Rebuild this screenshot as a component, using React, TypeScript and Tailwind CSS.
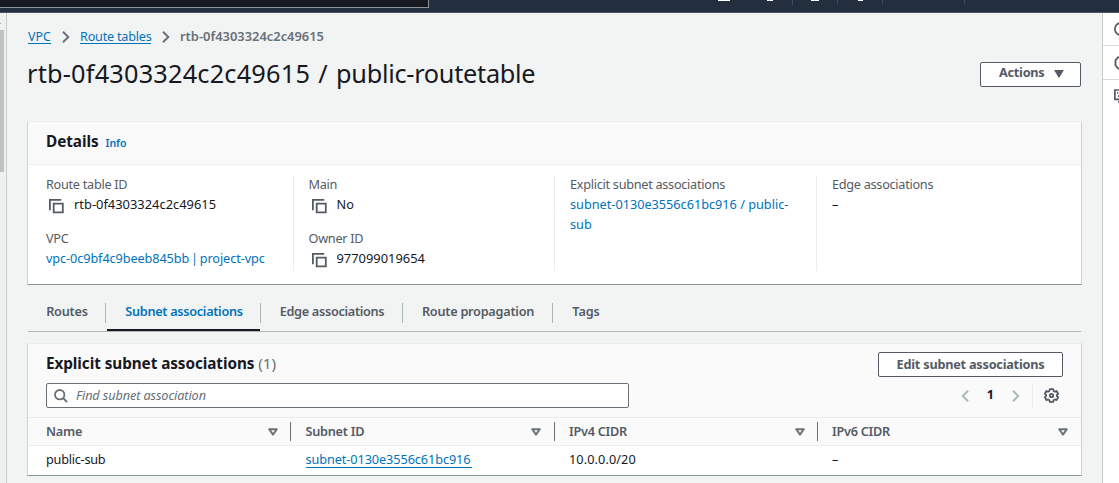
import type { ReactNode } from 'react';

function CopyIcon() {
  return (
    <svg width="15" height="15" viewBox="0 0 15 15" fill="none" stroke="#545b64" strokeWidth="1.8" className="block shrink-0">
      <path d="M0.9 11.2V0.9H12.2" />
      <path d="M4.7 4.7H13.8V13.4H4.7Z" />
    </svg>
  );
}

function Chevron({ dir = 'right', className = '' }: { dir?: 'left' | 'right'; className?: string }) {
  return (
    <svg width="8" height="12" viewBox="0 0 8 12" fill="none" stroke="currentColor" strokeWidth="1.9" className={`block shrink-0 ${className}`}>
      <path d={dir === 'right' ? 'M1 0.8L6.3 6L1 11.2' : 'M7 0.8L1.7 6L7 11.2'} />
    </svg>
  );
}

function SortIcon() {
  return (
    <svg width="10" height="8" viewBox="0 0 10 8" fill="none" stroke="#687078" strokeWidth="1.9" strokeLinejoin="round" className="block shrink-0">
      <path d="M1.2 1.2H8.8L5 6.6Z" />
    </svg>
  );
}

function GearIcon() {
  return (
    <svg width="15" height="15" viewBox="0 0 16 16" fill="none" stroke="#545b64" strokeWidth="1.9" strokeLinejoin="round" className="block shrink-0">
      <path d="M6.2 1.2H9.8L10.2 3.1L11.6 3.9L13.4 3.2L15.1 6.2L13.7 7.4V8.7L15.1 9.9L13.4 12.9L11.6 12.2L10.2 13L9.8 14.9H6.2L5.8 13L4.4 12.2L2.6 12.9L0.9 9.9L2.3 8.7V7.4L0.9 6.2L2.6 3.2L4.4 3.9L5.8 3.1Z" />
      <circle cx="8" cy="8" r="1.8" />
    </svg>
  );
}

function TopBar() {
  return (
    <header className="flex h-[13px] shrink-0 items-start overflow-hidden border-b border-[#4b5563] bg-[#232f3e]">
      <div className="h-2 w-[429px] border-r border-b border-[#879596] bg-[#16191f]" />
      <div className="ml-[289px] h-px w-[12px] bg-white" />
      <div className="ml-[37px] h-px w-[6px] bg-white" />
      <div className="ml-[19px] h-[5px] w-px bg-[#414d5c]" />
      <div className="ml-[18px] h-px w-[8px] bg-white" />
      <div className="ml-[18px] h-1 w-px bg-[#414d5c]" />
      <div className="ml-[20px] h-px w-[5px] bg-white" />
      <div className="ml-[19px] h-1 w-px bg-[#414d5c]" />
      <div className="ml-[81px] h-1 w-px bg-[#414d5c]" />
    </header>
  );
}

function Breadcrumbs() {
  return (
    <nav className="flex h-[18px] items-start text-[13px] leading-[16px]">
      <a className="h-4 w-[23px] border-b border-[#0073bb] text-[12.4px] leading-[17px] whitespace-nowrap text-[#0073bb]">VPC</a>
      <Chevron className="mt-[3px] ml-[11px] text-[#687078]" />
      <a className="ml-[10px] h-4 w-[71px] border-b border-[#0073bb] text-[12.6px] leading-[17px] tracking-[-0.2px] whitespace-nowrap text-[#0073bb]">Route tables</a>
      <Chevron className="mt-[3px] ml-[11px] text-[#687078]" />
      <span className="ml-[10px] text-[12.9px] leading-[16px] font-semibold text-[#687078]">rtb-0f4303324c2c49615</span>
    </nav>
  );
}

function Card({ children, className }: { children: ReactNode; className: string }) {
  return (
    <section className={`w-[1055px] border border-t-[#eaeded] border-r-[#ced4d5] border-b-[#879596] border-l-[#ced4d5] bg-white ${className}`}>
      {children}
    </section>
  );
}

function Field({ label, children, copy = false }: { label: string; children: ReactNode; copy?: boolean }) {
  return (
    <div className="flex flex-col text-[13px] leading-[20px]">
      <div className="text-[12.7px] tracking-[-0.28px] text-[#545b64]">{label}</div>
      <div className="flex">
        {copy && (
          <span className="mt-[5px] mr-[10px] ml-[3px]">
            <CopyIcon />
          </span>
        )}
        {children}
      </div>
    </div>
  );
}

function Details() {
  return (
    <Card className="mt-[31px] h-[164px]">
      <div className="flex h-[43px] items-baseline gap-[7px] border-b border-[#eaeded] bg-[#fafafa] px-[18px] pt-[8px]">
        <h2 className="text-[15.3px] leading-[22px] font-bold tracking-[-0.05px] text-[#16191f]">Details</h2>
        <a className="text-[10.6px] font-semibold tracking-[-0.1px] text-[#0073bb]">Info</a>
      </div>
      <div className="mt-[11px] flex h-[95px] divide-x divide-[#eaeded]">
        <div className="flex w-[266px] flex-col gap-[14px] pl-[18px]">
          <div className="-mt-[2px]">
            <Field label="Route table ID" copy>
              <span className="text-[12.9px] text-[#16191f]">rtb-0f4303324c2c49615</span>
            </Field>
          </div>
          <Field label="VPC">
            <a className="text-[12.7px] tracking-[-0.09px] whitespace-nowrap text-[#0073bb] [word-spacing:-1.4px]">vpc-0c9bf4c9beeb845bb | project-vpc</a>
          </Field>
        </div>
        <div className="flex w-[261px] flex-col gap-[14px] pl-[14.5px]">
          <div className="-mt-[2px]">
            <Field label="Main" copy>
              <span className="text-[12.7px] text-[#16191f]">No</span>
            </Field>
          </div>
          <Field label="Owner ID" copy>
            <span className="text-[12.9px] text-[#16191f]">977099019654</span>
          </Field>
        </div>
        <div className="w-[262px] pl-[15px]">
          <div className="-mt-[2px]">
            <Field label="Explicit subnet associations">
              <a className="text-[12.7px] whitespace-nowrap text-[#0073bb]">
                subnet-0130e3556c61bc916 / public-
                <br />
                sub
              </a>
            </Field>
          </div>
        </div>
        <div className="pl-[15px]">
          <div className="-mt-[2px]">
            <Field label="Edge associations">
              <span className="text-[#16191f]">–</span>
            </Field>
          </div>
        </div>
      </div>
    </Card>
  );
}

function Tabs() {
  const divider = <div className="mt-[18px] h-5 w-px bg-[#aab7b8]" />;
  const tab = 'pt-[16px] text-center leading-[20px] whitespace-nowrap';
  return (
    <div className="ml-px flex h-[47px] w-[1053px] border-b border-[#aab7b8] text-[12.7px] font-semibold tracking-[-0.3px] text-[#545b64]">
      <div className={`w-[77px] pl-px tracking-[-0.2px] ${tab}`}>Routes</div>
      {divider}
      <div className={`ml-px w-[153px] border-b-2 border-[#16191f] pl-px text-[#0073bb] ${tab}`}>Subnet associations</div>
      {divider}
      <div className={`w-[141px] pl-px ${tab}`}>Edge associations</div>
      {divider}
      <div className={`w-[149px] pl-px tracking-[-0.25px] ${tab}`}>Route propagation</div>
      {divider}
      <div className={`w-[66px] tracking-[-0.1px] ${tab}`}>Tags</div>
    </div>
  );
}

function HeadCell({ children, className, last = false }: { children: ReactNode; className: string; last?: boolean }) {
  return (
    <div className={`flex h-[19px] items-center justify-between ${last ? '' : 'border-r border-[#687078]'} ${className}`}>
      <span>{children}</span>
      <SortIcon />
    </div>
  );
}

function Associations() {
  return (
    <Card className="mt-[11px] h-[133px]">
      <div className="flex h-[74px] flex-col border-b border-[#eaeded] bg-[#fafafa] px-[18px] pt-[8px]">
        <div className="flex h-[25px] items-start justify-between">
          <h2 className="text-[15.3px] leading-[23px] font-bold tracking-[-0.07px] text-[#16191f]">
            Explicit subnet associations <span className="font-normal text-[#687078]">(1)</span>
          </h2>
          <button className="h-[25px] w-[185px] rounded-[2px] border border-[#545b64] bg-white pb-[2px] text-[12.7px] leading-[20px] font-bold tracking-[-0.22px] whitespace-nowrap text-[#545b64]">
            Edit subnet associations
          </button>
        </div>
        <div className="mt-[6px] flex h-[25px] items-center">
          <div className="flex h-[25px] w-[583px] items-center rounded-[2px] border border-[#687078] bg-white pl-[7px]">
            <svg width="14" height="14" viewBox="0 0 14 14" fill="none" stroke="#687078" strokeWidth="1.8" className="block">
              <circle cx="5.7" cy="5.7" r="4.7" />
              <path d="M9 9L13 13" />
            </svg>
            <span className="ml-[8px] pb-[2px] text-[12.7px] leading-[20px] tracking-[-0.1px] text-[#687078] italic">Find subnet association</span>
          </div>
          <div className="ml-[332px] flex h-[25px] items-center">
            <Chevron dir="left" className="text-[#aab7b8]" />
            <span className="w-[43px] pb-[3px] text-center text-[12.7px] leading-[20px] font-bold text-[#16191f]">1</span>
            <Chevron className="text-[#aab7b8]" />
            <div className="ml-[12px] h-[25px] w-px bg-[#eaeded]" />
            <div className="ml-[11px]">
              <GearIcon />
            </div>
          </div>
        </div>
      </div>
      <div className="flex h-[28px] items-center border-b border-[#eaeded] bg-[#fafafa] text-[12.7px] font-semibold tracking-[-0.25px] text-[#545b64]">
        <HeadCell className="w-[263px] pr-[12px] pl-[18px]">Name</HeadCell>
        <HeadCell className="w-[264px] pr-[13px] pl-[14.5px]">Subnet ID</HeadCell>
        <HeadCell className="w-[263px] pr-[12px] pl-[14px]">IPv4 CIDR</HeadCell>
        <HeadCell className="w-[263px] pr-[13px] pl-[14px]" last>IPv6 CIDR</HeadCell>
      </div>
      <div className="flex h-[29px] items-start pt-[4px] text-[12.7px] leading-[18px] text-[#16191f]">
        <div className="w-[263px] pl-[18px] tracking-[-0.25px]">public-sub</div>
        <div className="w-[264px] pl-[14.5px]">
          <a className="block h-[18px] w-[166px] border-b border-[#0073bb] tracking-[-0.08px] whitespace-nowrap text-[#0073bb]">subnet-0130e3556c61bc916</a>
        </div>
        <div className="w-[263px] pl-[14px] tracking-[0.1px]">10.0.0.0/20</div>
        <div className="pl-[14px]">–</div>
      </div>
    </Card>
  );
}

function ToolRail() {
  return (
    <aside className="flex w-[17px] shrink-0 flex-col overflow-hidden border-l border-[#c6cccd] bg-white text-[#545b64]">
      <div className="flex h-[33px] shrink-0 items-center border-b border-[#d5dbdb] pl-[11px]">
        <svg width="14" height="14" viewBox="0 0 14 14" fill="none" stroke="currentColor" strokeWidth="1.7" className="block shrink-0">
          <circle cx="7" cy="7" r="6.1" />
          <path d="M7 6V10M7 3.5V5" />
        </svg>
      </div>
      <div className="flex h-[34px] shrink-0 items-center border-b border-[#d5dbdb] pl-[11px]">
        <svg width="14" height="14" viewBox="0 0 14 14" fill="none" stroke="currentColor" strokeWidth="1.8" className="block shrink-0">
          <path d="M4.3 1.2L1.5 4V9.5L4.3 12.5H10L13 9.5V4L10 1.2Z" />
        </svg>
      </div>
      <div className="flex h-[32px] shrink-0 items-center pl-[11px]">
        <svg width="14" height="14" viewBox="0 0 14 14" fill="none" stroke="currentColor" strokeWidth="1.7" className="block shrink-0">
          <path d="M0.9 1H13V10.3H0.9Z" />
          <path d="M3 3.8H4.2M4 7.2H8M4 12.8H10" />
        </svg>
      </div>
    </aside>
  );
}

export default function App() {
  return (
    <div className="flex h-[483px] w-[1119px] flex-col overflow-hidden bg-[#f2f3f3] font-['Noto_Sans','Open_Sans',sans-serif]">
      <TopBar />
      <div className="flex min-h-0 flex-1">
        <div className="flex w-[7px] shrink-0 flex-col border-r border-[#c6cccd] bg-[#f0f0f0]">
          <div className="mt-[10px] h-px w-px bg-[#a3a3a3]" />
          <div className="mt-[6px] h-[142px] w-1 bg-[#c1c1c1]" />
        </div>
        <main className="min-w-0 flex-1 pt-[15px] pl-[20px]">
          <div className="pl-px">
            <Breadcrumbs />
          </div>
          <div className="mt-[12px] flex h-[32px] w-[1054px] items-start justify-between">
            <h1 className="text-[25.3px] leading-[30px] whitespace-nowrap text-[#16191f]">
              <span className="tracking-[0.2px] [word-spacing:1.4px]">rtb-0f4303324c2c49615 / </span>
              <span className="tracking-[-0.28px]">public-routetable</span>
            </h1>
            <button className="mt-[4px] flex h-[25px] w-[101px] items-start rounded-[2px] border border-[#545b64] bg-white pl-[18px] text-[12.7px] leading-[19px] font-bold tracking-[-0.25px] text-[#545b64]">
              Actions
              <svg width="10" height="8" viewBox="0 0 10 8" className="mt-[7px] ml-[10px] block" fill="#545b64">
                <path d="M0.8 0H9.2Q10 0 9.5 0.8L5.6 7.3Q5 8 4.4 7.3L0.5 0.8Q0 0 0.8 0Z" />
              </svg>
            </button>
          </div>
          <Details />
          <Tabs />
          <Associations />
        </main>
        <ToolRail />
      </div>
    </div>
  );
}
